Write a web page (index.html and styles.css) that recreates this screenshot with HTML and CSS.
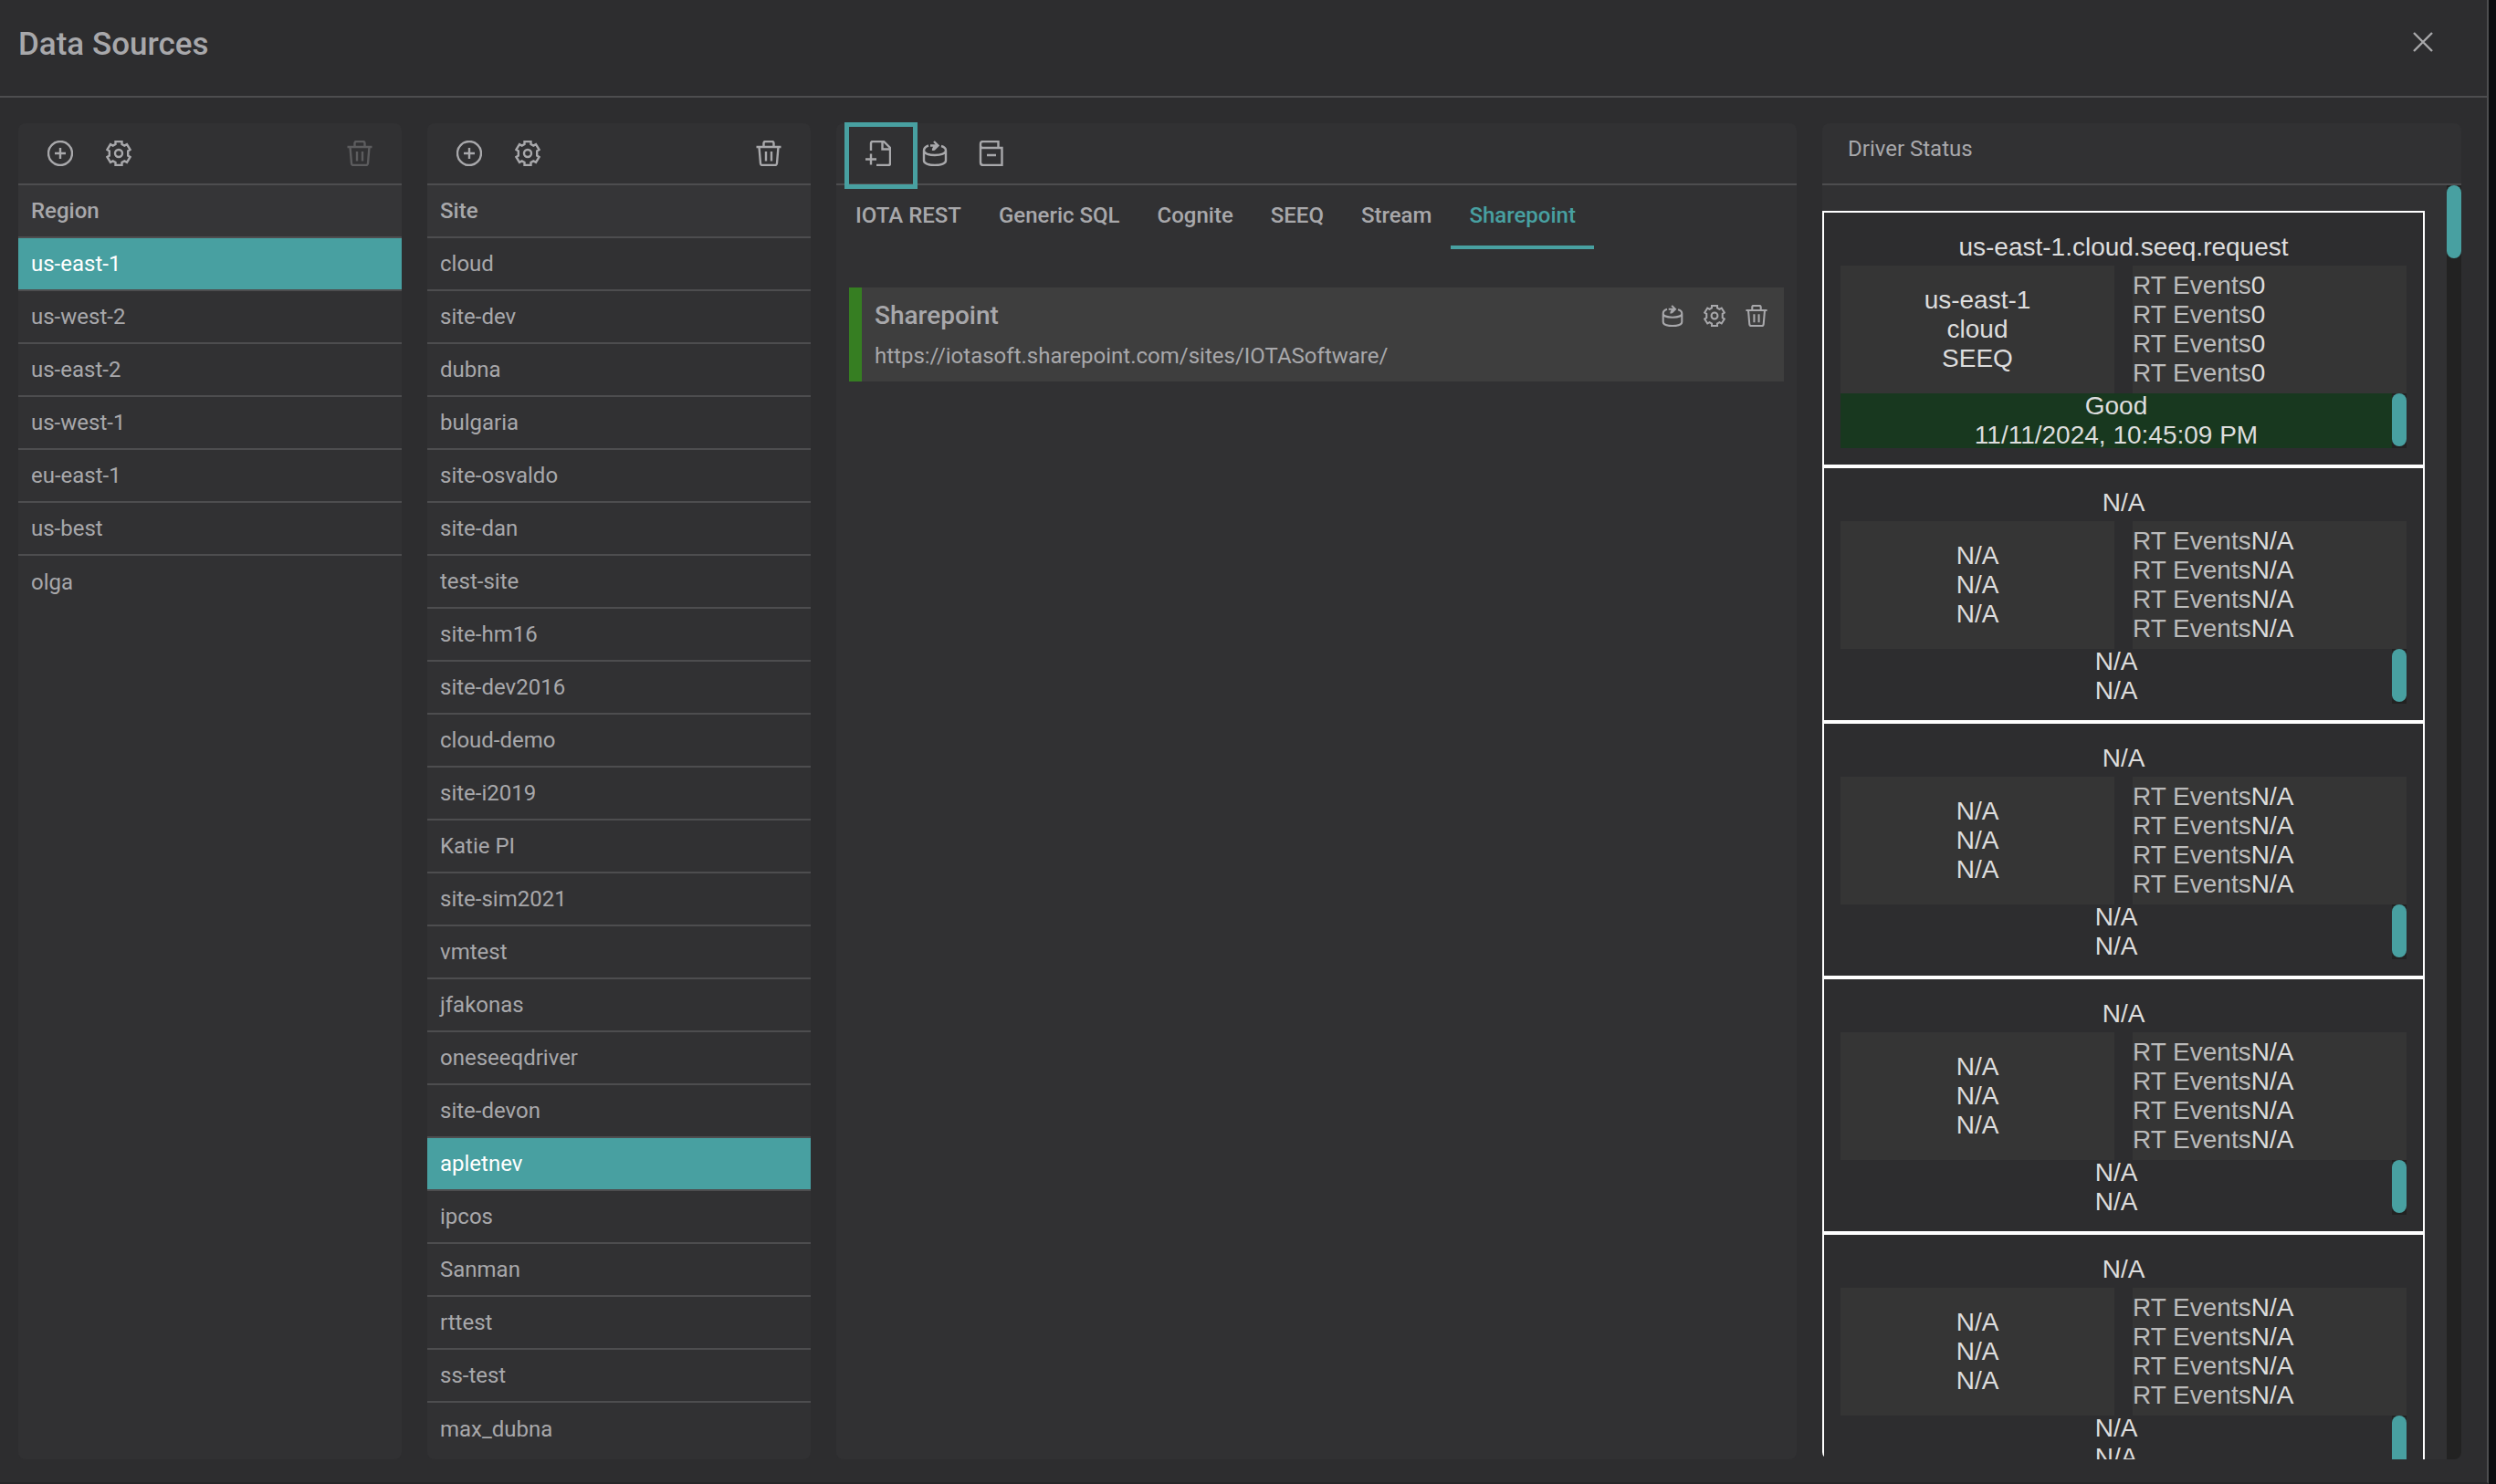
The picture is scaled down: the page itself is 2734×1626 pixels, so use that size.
FILE: index.html
```html
<!DOCTYPE html>
<html lang="en">
<head>
    <meta charset="UTF-8">
    <meta name="viewport" content="width=device-width, initial-scale=1.0">
    <title>Data Sources</title>
    <link rel="stylesheet" href="styles.css">
</head>
<body>

    <!-- Icon set -->
    <svg class="icon-defs" aria-hidden="true">
        <symbol id="icon-add" viewBox="0 0 28 28">
            <circle cx="14" cy="14" r="13"/>
            <path d="M14 8v12M8 14h12"/>
        </symbol>
        <symbol id="icon-settings" viewBox="0 0 28 28">
            <path d="M10.5 1h7v3l2.800 1.600 2.700-1.500 3.600 5.900-2.400 1.500v5l2.400 1.500-3.600 5.900-2.700-1.500-2.800 1.600V27h-7v-3l-2.800-1.600L5 23.900 1.400 18l2.400-1.500v-5L1.400 10 5 4.100l2.700 1.500L10.500 4z"/>
            <circle cx="14" cy="14" r="4"/>
        </symbol>
        <symbol id="icon-delete" viewBox="0 0 28 28">
            <path d="M.5 7h27M8.500 7V3q0-2 2-2h7q2 0 2 2v4M3.500 7l1.500 18q.2 2 2.200 2h13.600q2 0 2.200-2l1.500-18M11 12v10.500M17 12v10.500"/>
        </symbol>
        <symbol id="icon-new-file" viewBox="0 0 28 28">
            <path d="M6 11V3q0-2 2-2h12l7 7v17q0 2-2 2H12M18.500 1v8.500H27M0 20.500h12M6 14.500v12"/>
        </symbol>
        <symbol id="icon-refresh-data" viewBox="0 0 28 28">
            <path d="M7 5.500C4 6.500 2 8.500 2 11v11c0 3 5 5 12 5s12-2 12-5V11c0-2-1.500-4-5-5M2 11c0 3 5 5 12 5s12-2 12-5M12 11c0-2 1-4 4-5M9 5.500h8M13 1l4.500 4.500L13 10"/>
        </symbol>
        <symbol id="icon-archive" viewBox="0 0 28 28">
            <path d="M21.500 8V1H5Q2 1 2 4v20q0 3 3 3h20.500V8H5Q2 8 2 5M9 16h10"/>
        </symbol>
        <symbol id="icon-close" viewBox="0 0 28 28">
            <path d="M4 4l20 20M24 4L4 24"/>
        </symbol>
    </svg>

    <div class="modal">
        <header class="modal-header">
            <h1>Data Sources</h1>
            <button type="button" class="icon-button close" aria-label="Close"><svg class="icon"><use href="#icon-close"/></svg></button>
        </header>

        <main class="columns">
            <section class="panel">
                <div class="toolbar">
                    <button type="button" class="icon-button" aria-label="Add region"><svg class="icon"><use href="#icon-add"/></svg></button>
                    <button type="button" class="icon-button" aria-label="Region settings"><svg class="icon"><use href="#icon-settings"/></svg></button>
                    <button type="button" class="icon-button push" aria-label="Delete region" disabled><svg class="icon"><use href="#icon-delete"/></svg></button>
                </div>
                <table class="list">
                    <thead>
                        <tr><th>Region</th></tr>
                    </thead>
                    <tbody>
                        <tr class="selected"><td>us-east-1</td></tr>
                        <tr><td>us-west-2</td></tr>
                        <tr><td>us-east-2</td></tr>
                        <tr><td>us-west-1</td></tr>
                        <tr><td>eu-east-1</td></tr>
                        <tr><td>us-best</td></tr>
                        <tr><td>olga</td></tr>
                    </tbody>
                </table>
            </section>

            <section class="panel">
                <div class="toolbar">
                    <button type="button" class="icon-button" aria-label="Add site"><svg class="icon"><use href="#icon-add"/></svg></button>
                    <button type="button" class="icon-button" aria-label="Site settings"><svg class="icon"><use href="#icon-settings"/></svg></button>
                    <button type="button" class="icon-button push" aria-label="Delete site"><svg class="icon"><use href="#icon-delete"/></svg></button>
                </div>
                <table class="list">
                    <thead>
                        <tr><th>Site</th></tr>
                    </thead>
                    <tbody>
                        <tr><td>cloud</td></tr>
                        <tr><td>site-dev</td></tr>
                        <tr><td>dubna</td></tr>
                        <tr><td>bulgaria</td></tr>
                        <tr><td>site-osvaldo</td></tr>
                        <tr><td>site-dan</td></tr>
                        <tr><td>test-site</td></tr>
                        <tr><td>site-hm16</td></tr>
                        <tr><td>site-dev2016</td></tr>
                        <tr><td>cloud-demo</td></tr>
                        <tr><td>site-i2019</td></tr>
                        <tr><td>Katie PI</td></tr>
                        <tr><td>site-sim2021</td></tr>
                        <tr><td>vmtest</td></tr>
                        <tr><td>jfakonas</td></tr>
                        <tr><td>oneseeqdriver</td></tr>
                        <tr><td>site-devon</td></tr>
                        <tr class="selected"><td>apletnev</td></tr>
                        <tr><td>ipcos</td></tr>
                        <tr><td>Sanman</td></tr>
                        <tr><td>rttest</td></tr>
                        <tr><td>ss-test</td></tr>
                        <tr><td>max_dubna</td></tr>
                    </tbody>
                </table>
            </section>

            <section class="panel sources">
                <div class="toolbar">
                    <button type="button" class="icon-button highlighted" aria-label="New data source"><svg class="icon"><use href="#icon-new-file"/></svg></button>
                    <button type="button" class="icon-button" aria-label="Reload data sources"><svg class="icon"><use href="#icon-refresh-data"/></svg></button>
                    <button type="button" class="icon-button" aria-label="Archive"><svg class="icon"><use href="#icon-archive"/></svg></button>
                </div>
                <nav class="tabs">
                    <button type="button" class="tab">IOTA REST</button>
                    <button type="button" class="tab">Generic SQL</button>
                    <button type="button" class="tab">Cognite</button>
                    <button type="button" class="tab">SEEQ</button>
                    <button type="button" class="tab">Stream</button>
                    <button type="button" class="tab active">Sharepoint</button>
                </nav>
                <article class="source">
                    <div class="source-title">
                        <h2>Sharepoint</h2>
                        <div class="source-actions">
                            <button type="button" class="icon-button" aria-label="Reload Sharepoint"><svg class="icon"><use href="#icon-refresh-data"/></svg></button>
                            <button type="button" class="icon-button" aria-label="Sharepoint settings"><svg class="icon"><use href="#icon-settings"/></svg></button>
                            <button type="button" class="icon-button" aria-label="Delete Sharepoint"><svg class="icon"><use href="#icon-delete"/></svg></button>
                        </div>
                    </div>
                    <p>https://iotasoft.sharepoint.com/sites/IOTASoftware/</p>
                </article>
            </section>

            <section class="panel">
                <div class="toolbar status-header">Driver Status</div>
                <div class="status-body">
                    <div class="drivers">
                        <article class="driver">
                            <h3>us-east-1.cloud.seeq.request</h3>
                            <div class="driver-info">
                                <div class="driver-name">us-east-1<br>cloud<br>SEEQ</div>
                                <div class="driver-events">
                                    <div>RT Events<b>0</b></div>
                                    <div>RT Events<b>0</b></div>
                                    <div>RT Events<b>0</b></div>
                                    <div>RT Events<b>0</b></div>
                                </div>
                            </div>
                            <div class="driver-state good">
                                <div class="state-text">Good<br>11/11/2024, 10:45:09 PM</div>
                                <div class="scrollbar"><div class="thumb"></div></div>
                            </div>
                        </article>
                        <article class="driver">
                            <h3>N/A</h3>
                            <div class="driver-info">
                                <div class="driver-name">N/A<br>N/A<br>N/A</div>
                                <div class="driver-events">
                                    <div>RT Events<b>N/A</b></div>
                                    <div>RT Events<b>N/A</b></div>
                                    <div>RT Events<b>N/A</b></div>
                                    <div>RT Events<b>N/A</b></div>
                                </div>
                            </div>
                            <div class="driver-state">
                                <div class="state-text">N/A<br>N/A</div>
                                <div class="scrollbar"><div class="thumb"></div></div>
                            </div>
                        </article>
                        <article class="driver">
                            <h3>N/A</h3>
                            <div class="driver-info">
                                <div class="driver-name">N/A<br>N/A<br>N/A</div>
                                <div class="driver-events">
                                    <div>RT Events<b>N/A</b></div>
                                    <div>RT Events<b>N/A</b></div>
                                    <div>RT Events<b>N/A</b></div>
                                    <div>RT Events<b>N/A</b></div>
                                </div>
                            </div>
                            <div class="driver-state">
                                <div class="state-text">N/A<br>N/A</div>
                                <div class="scrollbar"><div class="thumb"></div></div>
                            </div>
                        </article>
                        <article class="driver">
                            <h3>N/A</h3>
                            <div class="driver-info">
                                <div class="driver-name">N/A<br>N/A<br>N/A</div>
                                <div class="driver-events">
                                    <div>RT Events<b>N/A</b></div>
                                    <div>RT Events<b>N/A</b></div>
                                    <div>RT Events<b>N/A</b></div>
                                    <div>RT Events<b>N/A</b></div>
                                </div>
                            </div>
                            <div class="driver-state">
                                <div class="state-text">N/A<br>N/A</div>
                                <div class="scrollbar"><div class="thumb"></div></div>
                            </div>
                        </article>
                        <article class="driver">
                            <h3>N/A</h3>
                            <div class="driver-info">
                                <div class="driver-name">N/A<br>N/A<br>N/A</div>
                                <div class="driver-events">
                                    <div>RT Events<b>N/A</b></div>
                                    <div>RT Events<b>N/A</b></div>
                                    <div>RT Events<b>N/A</b></div>
                                    <div>RT Events<b>N/A</b></div>
                                </div>
                            </div>
                            <div class="driver-state">
                                <div class="state-text">N/A<br>N/A</div>
                                <div class="scrollbar"><div class="thumb"></div></div>
                            </div>
                        </article>
                    </div>
                    <div class="scrollbar page-scroll"><div class="thumb"></div></div>
                </div>
            </section>
        </main>
    </div>

</body>
</html>
```
FILE: styles.css
```css
*, *::after {
    box-sizing: border-box;
}

body {
    margin: 0;
    height: 100vh;
    padding-right: 8px;
    background-color: #0c0d0f;
    font-family: Roboto, sans-serif;
    font-size: 24px;
    line-height: 28px;
    color: #a8a8ab;
    overflow: hidden;
}

h1, h2, h3, p {
    margin: 0;
}

.modal {
    display: flex;
    flex-direction: column;
    height: 100%;
    background-color: #2d2d2f;
    border-right: 2px solid #4d4d4f;
    border-bottom: 2px solid #262628;
}

.modal-header {
    display: flex;
    justify-content: space-between;
    align-items: flex-start;
    padding: 24px 56px 31px 20px;
    border-bottom: 2px solid #4d4d4f;
}

h1 {
    font-size: 35px;
    line-height: 50px;
    font-weight: 500;
}

.columns {
    flex: 1;
    min-height: 0;
    display: grid;
    grid-template-columns: 420px 420px 1fr 700px;
    gap: 28px;
    padding: 28px 28px 25px 20px;
}

.panel {
    display: flex;
    flex-direction: column;
    min-height: 0;
    background-color: #313133;
    border-radius: 8px;
    overflow: hidden;
}

/* Icons */
.icon-defs {
    display: none;
}

.icon {
    display: block;
    width: 28px;
    height: 28px;
    fill: none;
    stroke: currentColor;
    stroke-width: 2.4;
    overflow: visible;
}

.icon-button {
    padding: 0;
    border: none;
    background: none;
    color: inherit;
    cursor: pointer;
}

.icon-button:disabled {
    color: #5c5c5e;
    cursor: default;
}

.close {
    margin-top: 8px;
}

.push {
    margin-left: auto;
}

.toolbar {
    display: flex;
    align-items: center;
    gap: 36px;
    height: 68px;
    padding: 0 32px;
    border-bottom: 2px solid #4d4d4f;
    flex-shrink: 0;
}

/* Region and site lists */
.list {
    width: 100%;
    border-spacing: 0;
}

.list th, .list td {
    height: 58px;
    padding: 0 14px;
    text-align: left;
    border-bottom: 2px solid #4d4d4f;
}

.list th {
    background-color: #353537;
    font-weight: 500;
}

.list tr:last-child td {
    border-bottom: none;
}

.list .selected {
    background-color: #48a0a1;
    color: white;
}

/* Data sources */
.sources {
    overflow: visible;
}

.sources .toolbar {
    gap: 34px;
}

.highlighted {
    position: relative;
}

.highlighted::after {
    content: "";
    position: absolute;
    top: -20px;
    left: -23px;
    width: 80px;
    height: 73px;
    border: 5px solid #48a0a1;
}

.tabs {
    display: flex;
    gap: 1px;
    padding-left: 1px;
}

.tab {
    height: 70px;
    padding: 0 20px;
    border: none;
    border-bottom: 4px solid transparent;
    background: none;
    font: inherit;
    font-weight: 500;
    color: inherit;
    cursor: pointer;
}

.tab.active {
    color: #48a0a1;
    border-bottom-color: #48a0a1;
}

.source {
    margin: 42px 14px 0;
    padding: 14px 18px 14px 14px;
    border-left: 14px solid #367e22;
    background-color: #3e3e3e;
}

.source-title {
    display: flex;
    justify-content: space-between;
    align-items: center;
    margin-bottom: 13px;
}

h2 {
    font-size: 28px;
    line-height: 34px;
    font-weight: 500;
}

.source-actions {
    display: flex;
    gap: 22px;
}

.source-actions .icon {
    width: 24px;
    height: 24px;
}

/* Driver status */
.status-header {
    align-items: flex-start;
    padding: 14px 28px;
}

.status-body {
    flex: 1;
    min-height: 0;
    display: flex;
}

.drivers {
    flex: 1;
    padding: 28px 24px 0 0;
    overflow: hidden;
    font-family: "Liberation Sans", Arial, sans-serif;
    font-size: 28px;
    line-height: 32px;
    color: #dddddd;
}

.driver {
    padding: 22px 18px 18px;
    border: 2px solid white;
    background-color: #2d2d2f;
}

.driver h3 {
    margin-bottom: 4px;
    font-size: 28px;
    font-weight: normal;
    text-align: center;
}

.driver-info {
    display: grid;
    grid-template-columns: 1fr 1fr;
    gap: 20px;
}

.driver-name, .driver-events {
    height: 140px;
    background-color: #353535;
}

.driver-name {
    padding-top: 22px;
    text-align: center;
}

.driver-events {
    padding-top: 6px;
    color: #bbbbbb;
}

.driver-events b {
    font-weight: normal;
    color: #dddddd;
}

.driver-state {
    display: flex;
    align-items: center;
    height: 60px;
}

.driver-state.good {
    background-color: #18381f;
}

.state-text {
    flex: 1;
    text-align: center;
}

.scrollbar {
    align-self: stretch;
    width: 16px;
    background-color: #222222;
}

.thumb {
    height: 58px;
    border-radius: 8px;
    background-color: #48a0a1;
}

.page-scroll .thumb {
    height: 80px;
}
```
